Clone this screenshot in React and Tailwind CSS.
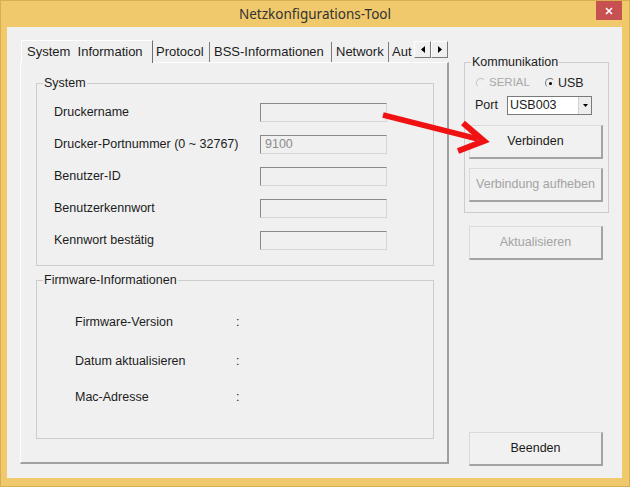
import React from "react";

const systemRows = [
  { label: "Druckername", value: "" },
  { label: "Drucker-Portnummer (0 ~ 32767)", value: "9100" },
  { label: "Benutzer-ID", value: "" },
  { label: "Benutzerkennwort", value: "" },
  { label: "Kennwort bestätig", value: "" },
];

function Field({ value }) {
  return (
    <div className="w-[127px] h-[19px] flex items-center pl-[4px] bg-[#f0f0f0] border-t border-l border-[#8a8a8a] border-r border-b border-r-[#d6d6d6] border-b-[#d6d6d6] text-[#8c8c8c]">
      {value}
    </div>
  );
}

function WinButton({ children, disabled, className = "" }) {
  return (
    <button
      type="button"
      className={`w-[134px] h-[34px] flex items-center justify-center bg-[#f1f1f1] border-t border-l border-[#dadada] border-r-2 border-b-2 border-r-[#a3a3a3] border-b-[#a3a3a3] ${
        disabled ? "text-[#a3a3a3]" : "text-[#1a1a1a]"
      } ${className}`}
    >
      {children}
    </button>
  );
}

function Radio({ checked, disabled }) {
  return (
    <span
      className={`relative w-[10px] h-[10px] rounded-full border flex items-center justify-center ${
        disabled
          ? "border-t-[#c4c4c4] border-l-[#c4c4c4] border-r-[#f4f4f4] border-b-[#f4f4f4]"
          : "border-t-[#7c7c7c] border-l-[#7c7c7c] border-r-[#e8e8e8] border-b-[#e8e8e8]"
      }`}
    >
      {checked && <span className="w-[3px] h-[3px] rounded-full bg-black" />}
    </span>
  );
}

export default function App() {
  return (
    <div className="relative w-[630px] h-[487px] bg-[#f0c96c] border border-[#d9ae52] flex flex-col font-['Liberation_Sans',Arial,sans-serif] text-[12.5px] text-[#1c1c1c]">
      {/* title bar */}
      <div className="h-[26px] flex items-center">
        <div className="w-[33px]" />
        <div className="flex-1 text-center font-['Noto_Sans',sans-serif] text-[13.5px] text-[#333]">
          Netzkonfigurations-Tool
        </div>
        <div className="self-start w-[26px] h-[19px] mr-[7px] bg-[#c75050] flex items-center justify-center">
          <svg width="8" height="8" viewBox="0 0 8 8">
            <path d="M1 1 L7 7 M7 1 L1 7" stroke="#fff" strokeWidth="1.6" />
          </svg>
        </div>
      </div>

      {/* client area */}
      <div className="flex-1 ml-[6px] mr-[7px] mb-[8px] bg-[#f0f0f0] flex pl-[13px] pt-[13px]">
        {/* tab control */}
        <div className="w-[429px] flex flex-col">
          <div className="h-[22px] flex items-end pl-[1px] text-[13px]">
            <div className="relative z-10 w-[132px] h-[23px] -mb-px pl-[5px] flex items-center whitespace-pre bg-[#f0f0f0] border-l border-t border-white border-r border-r-[#6f6f6f]">
              System  Information
            </div>
            <div className="w-[57px] h-[20px] pl-[3px] flex items-center border-r border-[#7a7a7a]">Protocol</div>
            <div className="w-[122px] h-[20px] pl-[4px] flex items-center border-r border-[#7a7a7a]">BSS-Informationen</div>
            <div className="w-[57px] h-[20px] pl-[4px] flex items-center border-r border-[#7a7a7a]">Network</div>
            <div className="w-[25px] h-[20px] pl-[3px] flex items-center">Aut</div>
            <div className="self-start mt-[1px] flex">
              <div className="w-[17px] h-[17px] flex items-center justify-center bg-[#f0f0f0] border-t border-l border-white border-r border-b border-r-[#7a7a7a] border-b-[#7a7a7a]">
                <svg width="4" height="7" viewBox="0 0 4 7">
                  <path d="M4 0 L0 3.5 L4 7 Z" fill="#000" />
                </svg>
              </div>
              <div className="w-[17px] h-[17px] flex items-center justify-center bg-[#f0f0f0] border-t border-l border-white border-r border-b border-r-[#7a7a7a] border-b-[#7a7a7a]">
                <svg width="4" height="7" viewBox="0 0 4 7">
                  <path d="M0 0 L4 3.5 L0 7 Z" fill="#000" />
                </svg>
              </div>
            </div>
          </div>

          <div className="h-[402px] border-l border-t border-[#fdfdfd] border-r-2 border-b-2 border-r-[#a0a0a0] border-b-[#a0a0a0] pl-[15px] pt-[13px]">
            <fieldset className="w-[398px] border border-[#cccccc]">
              <legend className="ml-[6px] px-[1px] leading-[14px]">System</legend>
              <div className="flex flex-col gap-[13px] pl-[17px] pt-[13px] pb-[15px]">
                {systemRows.map((row) => (
                  <div key={row.label} className="h-[19px] flex items-center">
                    <div className="w-[206px]">{row.label}</div>
                    <Field value={row.value} />
                  </div>
                ))}
              </div>
            </fieldset>

            <fieldset className="w-[398px] mt-[7px] border border-[#cccccc]">
              <legend className="ml-[6px] px-[1px] leading-[14px]">Firmware-Informationen</legend>
              <div className="pl-[38px] pt-[27px] pb-[33px]">
                <div className="h-[16px] flex items-center">
                  <div className="w-[161px]">Firmware-Version</div>
                  <div>:</div>
                </div>
                <div className="h-[16px] mt-[23px] flex items-center">
                  <div className="w-[161px]">Datum aktualisieren</div>
                  <div>:</div>
                </div>
                <div className="h-[16px] mt-[20px] flex items-center">
                  <div className="w-[161px]">Mac-Adresse</div>
                  <div>:</div>
                </div>
              </div>
            </fieldset>
          </div>
        </div>

        {/* right column */}
        <div className="w-[145px] ml-[15px] mt-[15px] flex flex-col">
          <fieldset className="border border-[#cccccc]">
            <legend className="ml-[6px] px-[1px] leading-[14px]">Kommunikation</legend>
            <div className="pl-[4px] pt-[6px] pb-[10px]">
              <div className="h-[16px] pl-[7px] flex items-center">
                <div className="w-[69px] flex items-center">
                  <Radio disabled />
                  <span className="ml-[3px] text-[11.5px] text-[#a8a8a8]">SERIAL</span>
                </div>
                <div className="flex items-center">
                  <Radio checked />
                  <span className="ml-[3px]">USB</span>
                </div>
              </div>
              <div className="h-[19px] mt-[5px] pl-[6px] flex items-center">
                <div className="w-[32px]">Port</div>
                <div className="w-[85px] h-[19px] flex bg-white border border-[#7a7a7a]">
                  <div className="flex-1 pl-[2px] flex items-center">USB003</div>
                  <div className="w-[13px] flex items-center justify-center bg-[#ededed] border-l border-[#d0d0d0]">
                    <svg width="5" height="3" viewBox="0 0 5 3">
                      <path d="M0 0 L5 0 L2.5 3 Z" fill="#000" />
                    </svg>
                  </div>
                </div>
              </div>
              <WinButton className="mt-[10px]">Verbinden</WinButton>
              <WinButton disabled className="mt-[9px]">
                Verbindung aufheben
              </WinButton>
            </div>
          </fieldset>
          <WinButton disabled className="mt-[13px] ml-[5px]">
            Aktualisieren
          </WinButton>
          <WinButton className="mt-[172px] ml-[5px]">Beenden</WinButton>
        </div>
      </div>

      {/* red annotation arrow */}
      <svg
        className="absolute -left-px -top-px pointer-events-none"
        width="630"
        height="487"
        viewBox="0 0 630 487"
      >
        <line x1="383" y1="115" x2="478" y2="139" stroke="#f01212" strokeWidth="5.5" />
        <polyline
          points="463,123 484,141 458,151"
          fill="none"
          stroke="#f01212"
          strokeWidth="6"
          strokeLinejoin="miter"
        />
      </svg>
    </div>
  );
}
